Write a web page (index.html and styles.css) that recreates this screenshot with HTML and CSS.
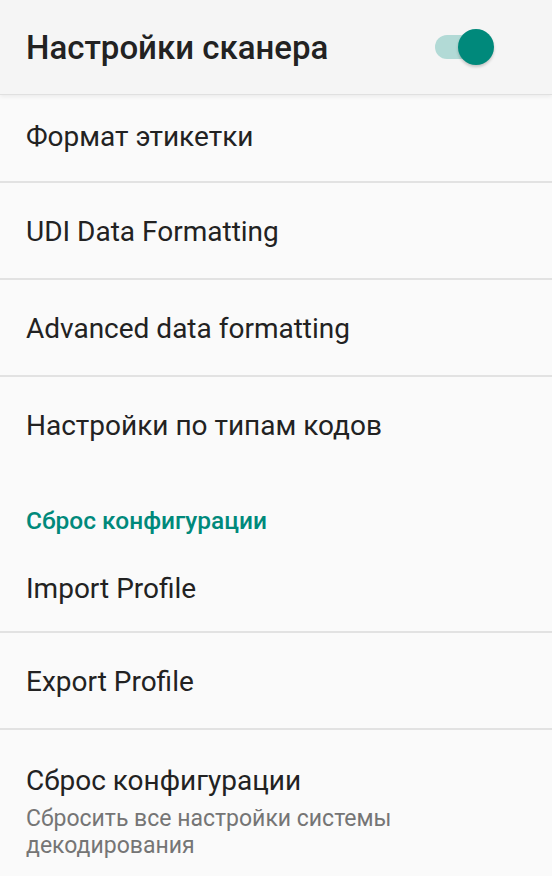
FILE: index.html
```html
<!DOCTYPE html>
<html>
  <head>
    <title>Настройки сканера</title>
    <link rel="stylesheet" href="styles.css">
  </head>
  <body>
    <div class="appbar">
      <h1 class="appbar-title">Настройки сканера</h1>
      <div class="switch">
        <div class="switch-track"></div>
        <div class="switch-thumb"></div>
      </div>
    </div>

    <div class="prefs">
      <div class="pref first"><span class="pref-title">Формат этикетки</span></div>
      <div class="pref"><span class="pref-title">UDI Data Formatting</span></div>
      <div class="pref"><span class="pref-title">Advanced data formatting</span></div>
      <div class="pref last"><span class="pref-title">Настройки по типам кодов</span></div>

      <div class="category">Сброс конфигурации</div>

      <div class="pref short"><span class="pref-title">Import Profile</span></div>
      <div class="pref"><span class="pref-title">Export Profile</span></div>
      <div class="pref last tall">
        <span class="pref-title">Сброс конфигурации</span>
        <span class="pref-summary">Сбросить все настройки системы декодирования</span>
      </div>
    </div>
  </body>
</html>
```

FILE: styles.css
```css
body {
  margin: 0;
  background: #fafafa;
  font-family: Roboto, "Noto Sans", sans-serif;
  color: #212121;
  overflow: hidden;
}
.appbar {
  height: 94px;
  background: #f5f5f5;
  border-bottom: 1px solid #e0e0e0;
  box-shadow: 0 2px 4px rgba(0,0,0,0.06);
  display: flex;
  align-items: center;
  padding: 0 0 0 26px;
  position: relative;
  z-index: 1;
}
.appbar-title {
  margin: 0;
  font-size: 33px;
  font-weight: 500;
  flex: 1;
  color: #222;
}
.switch { position: relative; width: 60px; height: 36px; margin-right: 57px; }
.switch-track {
  position: absolute;
  left: 0; top: 6px;
  width: 56px; height: 24px;
  border-radius: 12px;
  background: #b2dad6;
}
.switch-thumb {
  position: absolute;
  left: 23px; top: 0;
  width: 36px; height: 36px;
  border-radius: 50%;
  background: #00897b;
  box-shadow: 0 2px 3px rgba(0,0,0,0.2);
}
.prefs { display: flex; flex-direction: column; }
.pref {
  height: 93px;
  padding: 2px 26px 0;
  border-bottom: 2px solid #e2e2e2;
  display: flex;
  flex-direction: column;
  justify-content: center;
}
.pref.first { height: 82px; padding-top: 0; padding-bottom: 4px; }
.pref.short { height: 73px; padding-top: 0; padding-bottom: 6px; }
.pref.last { border-bottom: none; }
.pref.tall { height: 146px; justify-content: flex-start; padding-top: 34px; box-sizing: border-box; }
.pref-title { font-size: 28px; color: #222; }
.pref-summary {
  font-size: 23px;
  line-height: 27px;
  color: #757575;
  margin-top: 8px;
  max-width: 420px;
}
.category {
  height: 80px;
  box-sizing: border-box;
  padding: 34px 26px 0;
  font-size: 24.5px;
  font-weight: 500;
  color: #00897b;
}
```
